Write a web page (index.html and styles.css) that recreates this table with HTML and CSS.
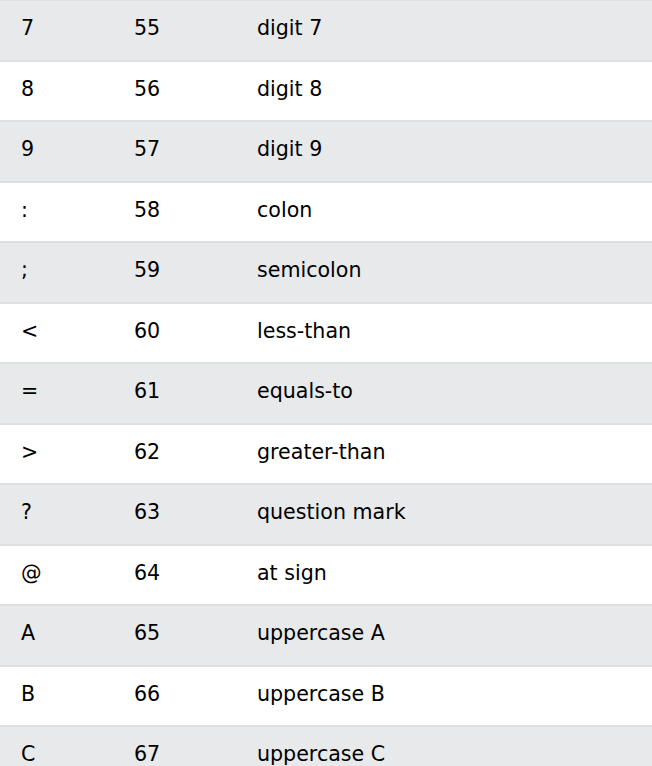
FILE: index.html
```html
<!DOCTYPE html>
<html>
<head>
<meta charset="utf-8">
<link rel="stylesheet" href="styles.css">
</head>
<body>
<div class="table">
  <div class="row odd"><span>7</span><span>55</span><span>digit 7</span></div>
  <div class="row"><span>8</span><span>56</span><span>digit 8</span></div>
  <div class="row odd"><span>9</span><span>57</span><span>digit 9</span></div>
  <div class="row"><span>:</span><span>58</span><span>colon</span></div>
  <div class="row odd"><span>;</span><span>59</span><span>semicolon</span></div>
  <div class="row"><span>&lt;</span><span>60</span><span>less-than</span></div>
  <div class="row odd"><span>=</span><span>61</span><span>equals-to</span></div>
  <div class="row"><span>&gt;</span><span>62</span><span>greater-than</span></div>
  <div class="row odd"><span>?</span><span>63</span><span>question mark</span></div>
  <div class="row"><span>@</span><span>64</span><span>at sign</span></div>
  <div class="row odd"><span>A</span><span>65</span><span>uppercase A</span></div>
  <div class="row"><span>B</span><span>66</span><span>uppercase B</span></div>
  <div class="row odd"><span>C</span><span>67</span><span>uppercase C</span></div>
</div>
</body>
</html>
```
FILE: styles.css
```css
html, body {
  margin: 0;
  padding: 0;
  background: #ffffff;
}
body {
  font-family: "DejaVu Sans", Verdana, sans-serif;
  font-size: 20.6px;
  color: #000000;
  overflow: hidden;
}
.table {
  display: flex;
  flex-direction: column;
  margin-top: -1px;
}
.row {
  box-sizing: border-box;
  height: 60.545px;
  border-top: 2px solid #dddfe1;
  display: grid;
  grid-template-columns: 113px 123px 1fr;
  padding: 15px 0 0 21px;
  line-height: 24px;
  background: #ffffff;
}
.row.odd {
  background: #e7e9eb;
}
```
